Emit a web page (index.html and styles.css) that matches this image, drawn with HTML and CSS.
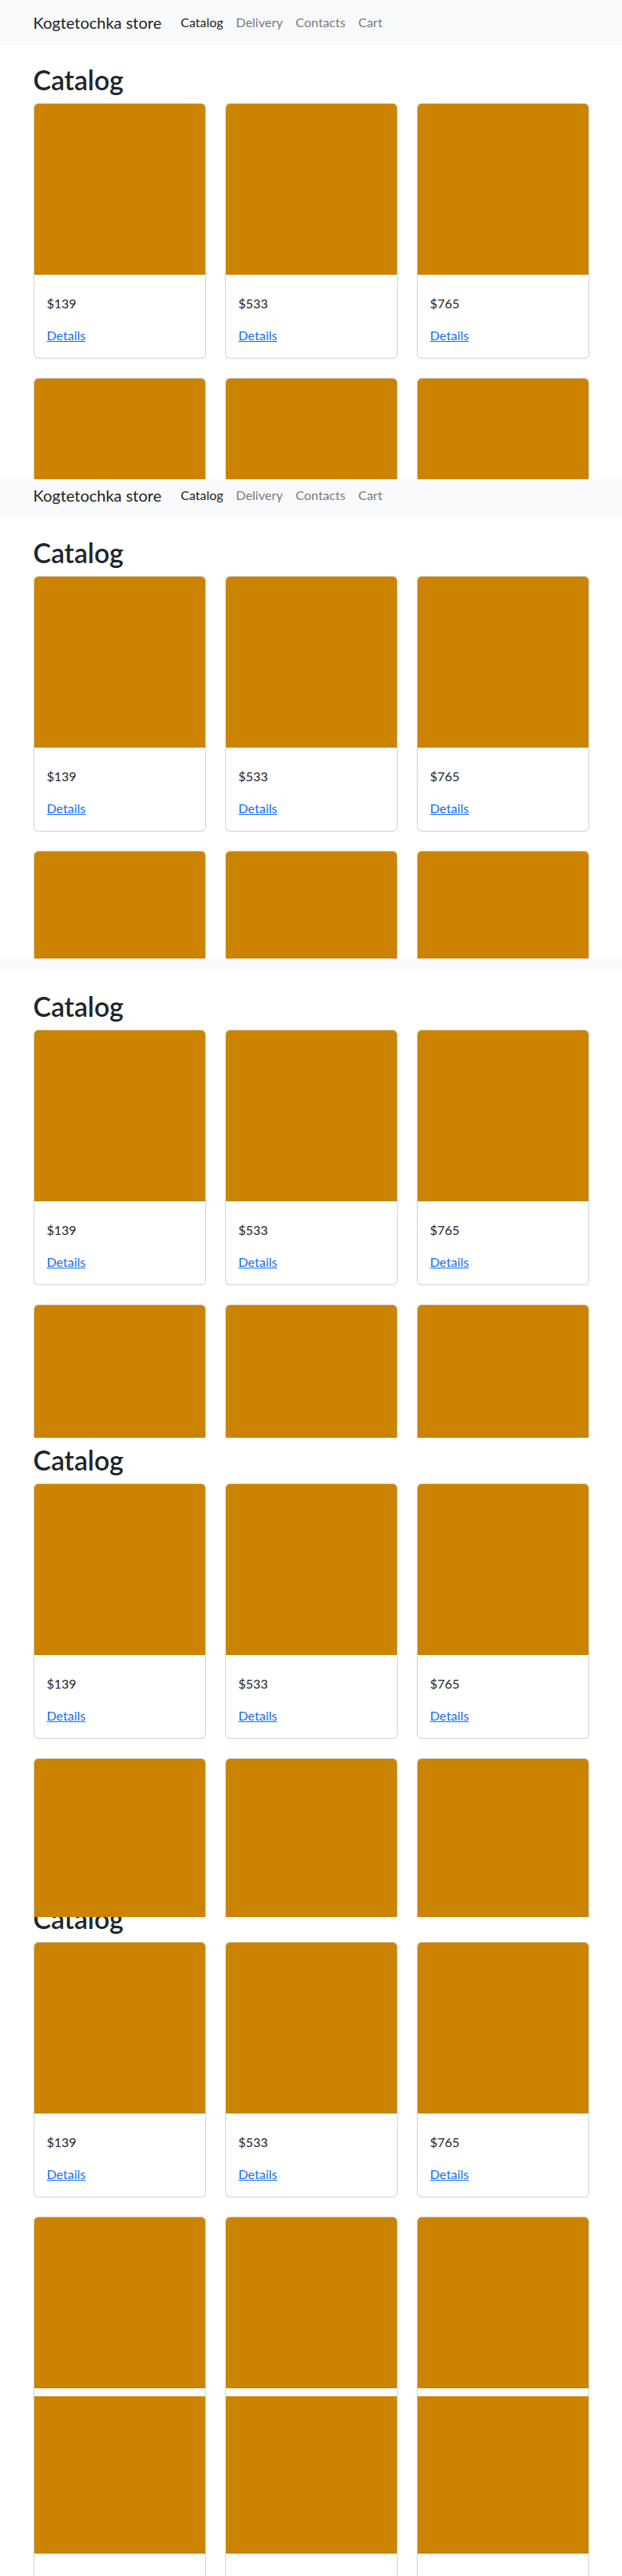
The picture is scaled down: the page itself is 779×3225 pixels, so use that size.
FILE: index.html
```html
<!DOCTYPE html>
<html lang="en">

<head>
	<meta charset="UTF-8">
	<title>Kogtetochka store</title>
	<link rel="stylesheet" href="styles.css">
</head>

<body>
	<!-- the page is shown as six stitched captures of the same scrolled document -->
	<div class="shot shot-1"></div>
	<div class="shot shot-2"></div>
	<div class="shot shot-3"></div>
	<div class="shot shot-4"></div>
	<div class="shot shot-5"></div>
	<div class="shot shot-6"></div>

	<template id="page">
		<div class="page">
			<nav class="navbar">
				<div class="container">
					<a class="brand" href="#">Kogtetochka store</a>
					<ul class="nav">
						<li><a class="active" href="#">Catalog</a></li>
						<li><a href="#">Delivery</a></li>
						<li><a href="#">Contacts</a></li>
						<li><a href="#">Cart</a></li>
					</ul>
				</div>
			</nav>
			<main class="container">
				<h1>Catalog</h1>
				<div class="catalog"></div>
			</main>
		</div>
	</template>

	<script>
		// second row never scrolls into any capture past its photos
		const products = [139, 533, 765, null, null, null];
		const tpl = document.getElementById("page");

		document.querySelectorAll(".shot").forEach(shot => {
			const page = tpl.content.cloneNode(true);
			const catalog = page.querySelector(".catalog");
			products.forEach(price => {
				const card = document.createElement("div");
				card.className = "card";
				card.innerHTML = `<div class="card-img"></div>`;
				if (price !== null) {
					card.innerHTML += `<div class="card-body">
						<p class="price">$${price}</p>
						<a href="#">Details</a>
					</div>`;
				} else {
					card.innerHTML += `<div class="card-body card-body-empty"></div>`;
				}
				catalog.appendChild(card);
			});
			shot.appendChild(page);
		});
	</script>
</body>

</html>
```

FILE: styles.css
```css
:root {
	--text: #212529;
	--light: #f8f9fa;
	--link: #0d6efd;
	--photo: #cc8400;
	--border: rgba(0, 0, 0, 0.175);
}

* {
	box-sizing: border-box;
}

body {
	margin: 0;
	background: white;
	color: var(--text);
	font-family: Lato, "Liberation Sans", sans-serif;
	font-size: 16px;
	line-height: 1.5;
}

/* one capture of the viewport */
.shot {
	height: 600px;
	overflow: hidden;
}

.shot-1>.page { margin-top: 0; }
.shot-2>.page { margin-top: -8px; }
.shot-3>.page { margin-top: -40px; }
.shot-4>.page { margin-top: -72px; }
.shot-5>.page { margin-top: -98px; }
.shot-6 { height: 225px; }
.shot-6>.page { margin-top: -147px; }

/* parts scrolled (almost) fully out of a capture */
.shot-3 .navbar>.container,
.shot-4 .navbar>.container,
.shot-5 .navbar>.container,
.shot-6 .navbar>.container,
.shot-6 h1,
.shot-6 .card-body {
	visibility: hidden;
}

.container {
	width: 720px;
	margin: 0 auto;
	padding: 0 12px;
}

.navbar {
	background-color: var(--light);
	padding: 8px 0;
}

.navbar>.container {
	display: flex;
	align-items: center;
}

.brand {
	font-size: 20px;
	line-height: 30px;
	padding: 5px 0;
	margin-right: 16px;
	color: rgba(0, 0, 0, 0.9);
	text-decoration: none;
}

.nav {
	display: flex;
	list-style: none;
	margin: 0;
	padding: 0;
}

.nav a {
	display: block;
	padding: 8px;
	color: rgba(0, 0, 0, 0.55);
	text-decoration: none;
}

.nav a.active {
	color: rgba(0, 0, 0, 0.9);
}

main.container {
	padding-top: 24px;
}

h1 {
	font-size: 33.7px;
	font-weight: 600;
	line-height: 41px;
	margin: 0 0 8px;
}

.catalog {
	display: grid;
	grid-template-columns: repeat(3, 1fr);
	gap: 24px;
}

.card {
	border: 1px solid var(--border);
	border-radius: 6px;
	background: white;
}

.card-img {
	aspect-ratio: 1;
	background-color: var(--photo);
	border-radius: 5px 5px 0 0;
}

.card-body {
	padding: 24px 16px 16px;
}

.card-body-empty {
	height: 104px;
}

.price {
	margin: 0 0 16px;
}

.card-body a {
	color: var(--link);
}
```
